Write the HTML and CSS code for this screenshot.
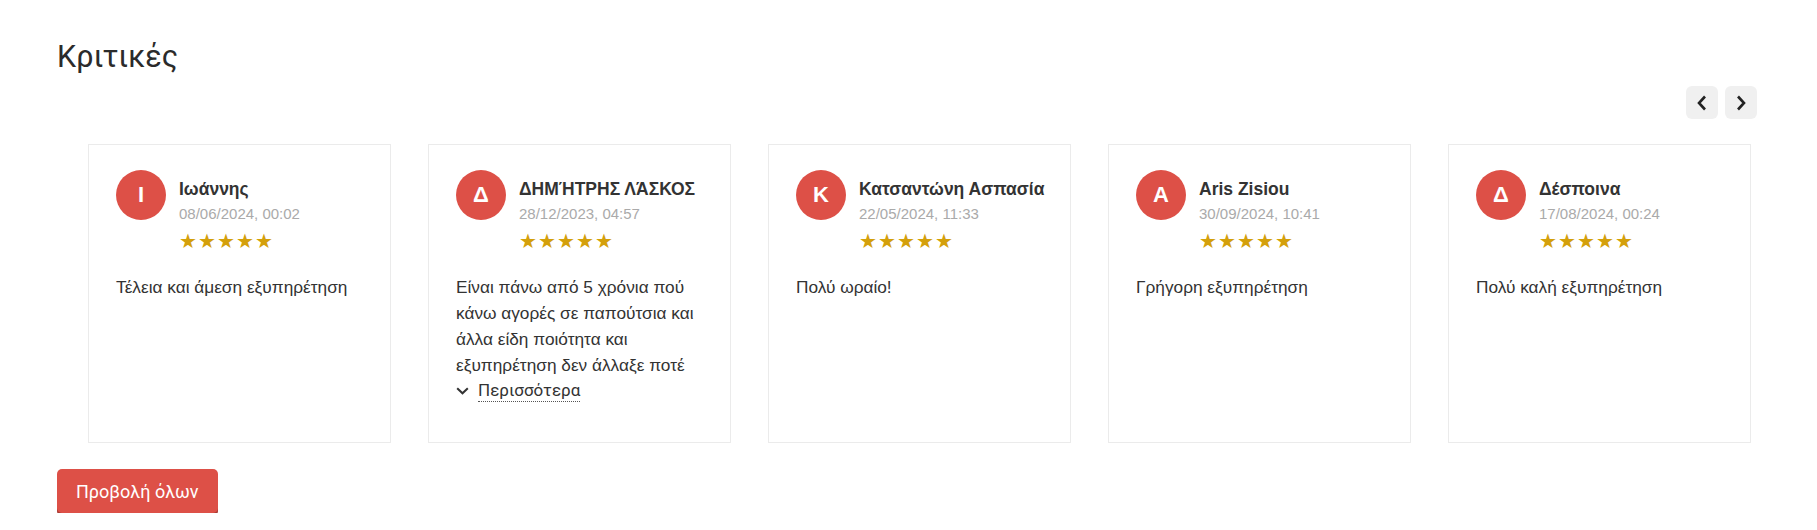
FILE: index.html
```html
<!DOCTYPE html>
<html lang="el">
<head>
    <meta charset="UTF-8">
    <meta name="viewport" content="width=device-width, initial-scale=1.0">
    <title>Κριτικές</title>
    <link rel="stylesheet" href="styles.css">
</head>
<body>

    <section class="reviews">
        <h2 class="reviews-title">Κριτικές</h2>

        <div class="reviews-nav">
            <button class="nav-btn" aria-label="Προηγούμενο">
                <svg width="10" height="16" viewBox="0 0 10 16"><path d="M8 1.5 L2 8 L8 14.5" fill="none" stroke="#222" stroke-width="2.6"/></svg>
            </button>
            <button class="nav-btn" aria-label="Επόμενο">
                <svg width="10" height="16" viewBox="0 0 10 16"><path d="M2 1.5 L8 8 L2 14.5" fill="none" stroke="#222" stroke-width="2.6"/></svg>
            </button>
        </div>

        <div class="reviews-track">
            <div class="review-card">
                <div class="review-head">
                    <div class="avatar">Ι</div>
                    <div class="review-info">
                        <div class="review-name">Ιωάννης</div>
                        <div class="review-date">08/06/2024, 00:02</div>
                        <div class="stars"><span>★</span><span>★</span><span>★</span><span>★</span><span>★</span></div>
                    </div>
                </div>
                <p class="review-text">Τέλεια και άμεση εξυπηρέτηση</p>
            </div>

            <div class="review-card">
                <div class="review-head">
                    <div class="avatar">Δ</div>
                    <div class="review-info">
                        <div class="review-name">ΔΗΜΉΤΡΗΣ ΛΆΣΚΟΣ</div>
                        <div class="review-date">28/12/2023, 04:57</div>
                        <div class="stars"><span>★</span><span>★</span><span>★</span><span>★</span><span>★</span></div>
                    </div>
                </div>
                <p class="review-text">Είναι πάνω από 5 χρόνια πού κάνω αγορές σε παπούτσια και άλλα είδη ποιότητα και εξυπηρέτηση δεν άλλαξε ποτέ</p>
                <a class="more-link" href="#">
                    <svg width="13" height="8" viewBox="0 0 13 8"><path d="M1.2 1.2 L6.5 6.3 L11.8 1.2" fill="none" stroke="#333" stroke-width="2"/></svg>
                    <span>Περισσότερα</span>
                </a>
            </div>

            <div class="review-card">
                <div class="review-head">
                    <div class="avatar">Κ</div>
                    <div class="review-info">
                        <div class="review-name">Κατσαντώνη Ασπασία</div>
                        <div class="review-date">22/05/2024, 11:33</div>
                        <div class="stars"><span>★</span><span>★</span><span>★</span><span>★</span><span>★</span></div>
                    </div>
                </div>
                <p class="review-text">Πολύ ωραίο!</p>
            </div>

            <div class="review-card">
                <div class="review-head">
                    <div class="avatar">A</div>
                    <div class="review-info">
                        <div class="review-name">Aris Zisiou</div>
                        <div class="review-date">30/09/2024, 10:41</div>
                        <div class="stars"><span>★</span><span>★</span><span>★</span><span>★</span><span>★</span></div>
                    </div>
                </div>
                <p class="review-text">Γρήγορη εξυπηρέτηση</p>
            </div>

            <div class="review-card">
                <div class="review-head">
                    <div class="avatar">Δ</div>
                    <div class="review-info">
                        <div class="review-name">Δέσποινα</div>
                        <div class="review-date">17/08/2024, 00:24</div>
                        <div class="stars"><span>★</span><span>★</span><span>★</span><span>★</span><span>★</span></div>
                    </div>
                </div>
                <p class="review-text">Πολύ καλή εξυπηρέτηση</p>
            </div>
        </div>

        <button class="view-all">Προβολή όλων</button>
    </section>

</body>
</html>
```

FILE: styles.css
```css
body {
    margin: 0;
    padding: 0;
    background: #fff;
    color: #333;
    font-family: 'Liberation Sans', Arial, sans-serif;
}
/* Section wrapper */
.reviews {
    padding: 39px 60px 0 57px;
}
.reviews-title {
    margin: 0;
    font-family: Roboto, sans-serif;
    font-size: 30.5px;
    font-weight: 400;
    line-height: 36px;
    color: #2b2b2b;
}
/* Slider arrows */
.reviews-nav {
    display: flex;
    justify-content: flex-end;
    gap: 7px;
    margin-top: 11px;
}
.nav-btn {
    width: 32px;
    height: 33px;
    padding: 0;
    border: none;
    border-radius: 6px;
    background: #f0f0f0;
    display: flex;
    align-items: center;
    justify-content: center;
    cursor: pointer;
}
/* Cards */
.reviews-track {
    display: flex;
    gap: 37px;
    margin-top: 25px;
    padding-left: 31px;
}
.review-card {
    width: 303px;
    height: 299px;
    box-sizing: border-box;
    border: 1px solid #ebebeb;
    padding: 25px 27px;
    flex-shrink: 0;
}
.review-head {
    display: flex;
    gap: 13px;
}
.avatar {
    width: 50px;
    height: 50px;
    border-radius: 50%;
    background: #dd5047;
    color: #fff;
    font-size: 22px;
    font-weight: bold;
    display: flex;
    align-items: center;
    justify-content: center;
    flex-shrink: 0;
}
.review-info {
    padding-top: 8px;
}
.review-name {
    font-size: 17.5px;
    font-weight: bold;
    line-height: 22px;
    color: #333;
    white-space: nowrap;
}
.review-date {
    margin-top: 4px;
    font-size: 15px;
    line-height: 20px;
    color: #aaa;
}
.stars {
    display: flex;
    gap: 1px;
    margin-top: 5px;
    color: #d4a00b;
    font-size: 20px;
    line-height: 24px;
}
.review-text {
    margin: 21px 0 0;
    font-size: 17.25px;
    line-height: 26px;
    color: #333;
}
.more-link {
    display: inline-flex;
    align-items: center;
    gap: 9px;
    margin-top: 1px;
    font-family: Roboto, sans-serif;
    font-size: 17px;
    line-height: 26px;
    color: #333;
    text-decoration: none;
}
.more-link span {
    border-bottom: 1px dotted #555;
    line-height: 22px;
}
/* Bottom button */
.view-all {
    margin-top: 26px;
    padding: 0 19px;
    height: 44px;
    border: none;
    border-radius: 5px;
    background: #dd5047;
    box-shadow: 0 3px 0 #a93a33;
    color: #fff;
    font-family: Roboto, sans-serif;
    font-size: 18px;
    cursor: pointer;
}
```
